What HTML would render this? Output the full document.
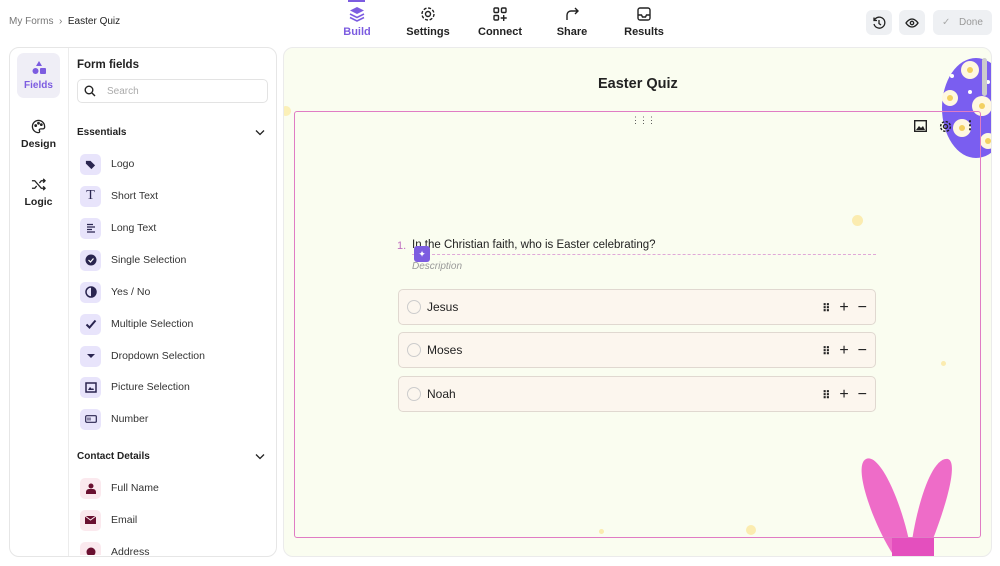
<!DOCTYPE html>
<html><head><style>
*{box-sizing:border-box;margin:0;padding:0}
body{width:1000px;height:566px;background:#fff;font-family:"Liberation Sans",sans-serif;color:#222;position:relative;overflow:hidden;font-size:11px}
.abs{position:absolute}
.nav{position:absolute;top:6px;text-align:center;font-size:11px;font-weight:bold;color:#222;width:70px}
.nav svg{display:block;margin:0 auto 4px}
.btn{position:absolute;top:10px;height:25px;background:#eef0f3;border-radius:6px}
.item{position:absolute;left:80px;height:22px;display:flex;align-items:center;font-size:10.5px;color:#333}
.ic{width:21px;height:21px;border-radius:5px;background:#e8e4fb;margin-right:10px;display:flex;align-items:center;justify-content:center}
.ic.r{background:#fbe9ee}
.opt{position:absolute;left:398px;width:478px;height:36px;border:1px solid #e0d8d0;border-radius:5px;background:#fcf6ee;display:flex;align-items:center;font-size:12px}
.opt .c{width:14px;height:14px;border:1px solid #ccc;border-radius:50%;margin:0 6px 0 8px}
.opt .t{position:absolute;right:8px;top:9px;display:flex;gap:9px;align-items:center;font-size:16px;color:#222}
</style></head><body>
<div class="abs" style="left:9px;top:16px;font-size:10px;color:#777">My Forms &nbsp;›&nbsp; <span style="color:#222">Easter Quiz</span></div>

<div class="nav" style="left:322px;color:#7c5ce0"><svg width="16" height="16" viewBox="0 0 16 16"><path d="M8 1L15 4.5 8 8 1 4.5z" fill="#7c5ce0"/><path d="M1 8l7 3.5L15 8M1 11.5l7 3.5 7-3.5" stroke="#7c5ce0" stroke-width="1.6" fill="none"/></svg>Build</div>
<div class="abs" style="left:348px;top:0;width:17px;height:2px;background:#7c5ce0"></div>
<div class="nav" style="left:393px"><svg width="16" height="16" viewBox="0 0 16 16"><circle cx="8" cy="8" r="2.5" stroke="#222" stroke-width="1.4" fill="none"/><circle cx="8" cy="8" r="6" stroke="#222" stroke-width="1.4" fill="none" stroke-dasharray="3 1.7"/></svg>Settings</div>
<div class="nav" style="left:465px"><svg width="16" height="16" viewBox="0 0 16 16" fill="none" stroke="#222" stroke-width="1.4"><rect x="2" y="2" width="4.5" height="4.5" rx="1"/><rect x="9.5" y="2" width="4.5" height="4.5" rx="1"/><rect x="2" y="9.5" width="4.5" height="4.5" rx="1"/><path d="M11.7 9v6M8.7 12h6"/></svg>Connect</div>
<div class="nav" style="left:537px"><svg width="16" height="16" viewBox="0 0 16 16" fill="none" stroke="#222" stroke-width="1.4"><path d="M3 14V9a4 4 0 014-4h7M11 2l3 3-3 3"/></svg>Share</div>
<div class="nav" style="left:609px"><svg width="16" height="16" viewBox="0 0 16 16" fill="none" stroke="#222" stroke-width="1.4"><rect x="2" y="2" width="12" height="12" rx="2"/><path d="M2 9h3.5l1 2h3l1-2H14"/></svg>Results</div>

<div class="btn" style="left:866px;width:26px"><svg class="abs" style="left:6px;top:6px" width="14" height="14" viewBox="0 0 14 14" fill="none" stroke="#222" stroke-width="1.3"><path d="M2.5 4A5.5 5.5 0 112 8M2 1.5V4.5H5M7 4v3.5l2 1.5"/></svg></div>
<div class="btn" style="left:899px;width:26px"><svg class="abs" style="left:6px;top:6px" width="14" height="14" viewBox="0 0 14 14" fill="none" stroke="#222" stroke-width="1.3"><path d="M1 7s2.5-4 6-4 6 4 6 4-2.5 4-6 4-6-4-6-4z"/><circle cx="7" cy="7" r="1.7"/></svg></div>
<div class="btn" style="left:933px;width:59px;color:#999;font-size:10px;line-height:25px;padding-left:26px">Done<span class="abs" style="left:9px;top:0;color:#aaa">✓</span></div>

<!-- left panel -->
<div class="abs" style="left:9px;top:47px;width:268px;height:510px;border:1px solid #e6e6e6;border-radius:10px"></div>
<div class="abs" style="left:68px;top:48px;width:1px;height:508px;background:#ececec"></div>
<div class="abs" style="left:17px;top:53px;width:43px;height:45px;background:#efeef6;border-radius:7px"></div>
<svg class="abs" style="left:31px;top:60px" width="16" height="16" viewBox="0 0 16 16" fill="#7c5ce0"><path d="M8 1l3 5H5z"/><circle cx="4.5" cy="11" r="3"/><rect x="9" y="8" width="6" height="6" rx="1"/></svg>
<div class="abs" style="left:17px;top:80px;width:43px;text-align:center;font-size:10px;font-weight:bold;color:#7c5ce0">Fields</div>
<svg class="abs" style="left:31px;top:119px" width="15" height="15" viewBox="0 0 16 16" fill="none" stroke="#222" stroke-width="1.4"><path d="M8 1.5a6.5 6.5 0 100 13c1.2 0 1.5-1 1-2s0-2 1.5-2H13a2 2 0 001.5-2.5A6.5 6.5 0 008 1.5z"/><circle cx="5" cy="7" r=".8"/><circle cx="8" cy="4.5" r=".8"/><circle cx="11" cy="6" r=".8"/></svg>
<div class="abs" style="left:17px;top:138px;width:43px;text-align:center;font-size:10.5px;font-weight:bold">Design</div>
<svg class="abs" style="left:31px;top:177px" width="15" height="15" viewBox="0 0 16 16" fill="none" stroke="#222" stroke-width="1.4"><path d="M1 4h3l7 8h4M1 12h3l2-2.5M9 6.5L11 4h4M13 2l2 2-2 2M13 10l2 2-2 2"/></svg>
<div class="abs" style="left:17px;top:196px;width:43px;text-align:center;font-size:10.5px;font-weight:bold">Logic</div>

<div class="abs" style="left:77px;top:59px;font-size:11.5px;font-weight:bold">Form fields</div>
<div class="abs" style="left:77px;top:79px;width:191px;height:24px;border:1px solid #e3e3e3;border-radius:5px"></div>
<svg class="abs" style="left:84px;top:85px" width="12" height="12" viewBox="0 0 12 12" fill="none" stroke="#222" stroke-width="1.4"><circle cx="5" cy="5" r="3.8"/><path d="M8 8l3 3"/></svg>
<div class="abs" style="left:107px;top:86px;font-size:10px;color:#aaa">Search</div>
<div class="abs" style="left:77px;top:127px;font-size:10px;font-weight:bold">Essentials</div>
<svg class="abs" style="left:255px;top:129px" width="10" height="7"><path d="M1 1.5l4 4 4-4" stroke="#222" stroke-width="1.3" fill="none"/></svg>

<div class="item" style="top:153px"><div class="ic"><svg width="11" height="11" viewBox="0 0 12 12"><path d="M1 2h5l5 5-4 4-6-6z" fill="#2a2550"/></svg></div>Logo</div>
<div class="item" style="top:185px"><div class="ic" style="font-family:'Liberation Serif',serif;font-size:14px;color:#2a2550">T</div>Short Text</div>
<div class="item" style="top:217px"><div class="ic"><svg width="10" height="10" viewBox="0 0 10 10" stroke="#2a2550" stroke-width="1.3"><path d="M1 1.5h6M1 4h8M1 6.5h5M1 9h8"/></svg></div>Long Text</div>
<div class="item" style="top:249px"><div class="ic"><svg width="12" height="12"><circle cx="6" cy="6" r="5.5" fill="#2a2550"/><path d="M3.5 6l2 2 3-3.5" stroke="#fff" stroke-width="1.2" fill="none"/></svg></div>Single Selection</div>
<div class="item" style="top:281px"><div class="ic"><svg width="12" height="12"><circle cx="6" cy="6" r="5" fill="none" stroke="#2a2550" stroke-width="1.5"/><path d="M6 1a5 5 0 010 10z" fill="#2a2550"/></svg></div>Yes / No</div>
<div class="item" style="top:313px"><div class="ic"><svg width="12" height="12"><path d="M1.5 6.5l3 3 6-7" stroke="#2a2550" stroke-width="2" fill="none"/></svg></div>Multiple Selection</div>
<div class="item" style="top:345px"><div class="ic"><svg width="8" height="6"><path d="M0 1h8L4 5z" fill="#2a2550"/></svg></div>Dropdown Selection</div>
<div class="item" style="top:376px"><div class="ic"><svg width="12" height="11"><rect x="1" y="1" width="10" height="9" fill="none" stroke="#2a2550" stroke-width="1.5"/><path d="M3 8l2-3 2 2 1-1 1 2z" fill="#2a2550"/></svg></div>Picture Selection</div>
<div class="item" style="top:408px"><div class="ic"><svg width="12" height="8"><rect x=".7" y=".7" width="10.6" height="6.6" rx="1" fill="none" stroke="#2a2550" stroke-width="1.2"/><path d="M3 2.5v3M5 2.5v3" stroke="#2a2550"/></svg></div>Number</div>
<div class="abs" style="left:77px;top:451px;font-size:10px;font-weight:bold">Contact Details</div>
<svg class="abs" style="left:255px;top:453px" width="10" height="7"><path d="M1 1.5l4 4 4-4" stroke="#222" stroke-width="1.3" fill="none"/></svg>
<div class="item" style="top:477px"><div class="ic r"><svg width="10" height="11"><circle cx="5" cy="3" r="2.5" fill="#6a1030"/><path d="M0 11v-2a3 3 0 013-3h4a3 3 0 013 3v2z" fill="#6a1030"/></svg></div>Full Name</div>
<div class="item" style="top:509px"><div class="ic r"><svg width="11" height="8"><rect width="11" height="8" fill="#6a1030"/><path d="M0 0l5.5 4L11 0" stroke="#fbe9ee" fill="none"/></svg></div>Email</div>
<div class="abs" style="left:70px;top:541px;width:200px;height:14px;overflow:hidden"><div class="item" style="left:10px;top:0"><div class="ic r"><svg width="10" height="10"><circle cx="5" cy="5" r="4.5" fill="#6a1030"/></svg></div>Address</div></div>

<!-- canvas -->
<div class="abs" style="left:283px;top:47px;width:709px;height:510px;background:#fafdf0;border:1px solid #ebebeb;border-radius:10px;overflow:hidden">
  <div class="abs" style="left:-3px;top:58px;width:10px;height:10px;border-radius:50%;background:#fbf0b8"></div>
  <div class="abs" style="left:568px;top:167px;width:11px;height:11px;border-radius:50%;background:#fbecb0"></div>
  <div class="abs" style="left:462px;top:477px;width:10px;height:10px;border-radius:50%;background:#fbecb0"></div>
  <div class="abs" style="left:457px;top:265px;width:5px;height:5px;border-radius:50%;background:#fbe0b0"></div>
  <div class="abs" style="left:657px;top:313px;width:5px;height:5px;border-radius:50%;background:#fbecb0"></div>
  <div class="abs" style="left:315px;top:481px;width:5px;height:5px;border-radius:50%;background:#fbecb0"></div>
  <svg class="abs" style="left:656px;top:8px" width="56" height="104" viewBox="0 0 56 104"><ellipse cx="36" cy="52" rx="34" ry="50" fill="#7a5ef0"/>
   <g fill="#fff8e0"><circle cx="30" cy="14" r="9"/><circle cx="42" cy="50" r="10"/><circle cx="10" cy="42" r="8"/><circle cx="22" cy="72" r="9"/><circle cx="48" cy="85" r="8"/></g>
   <g fill="#f3d060"><circle cx="30" cy="14" r="3"/><circle cx="42" cy="50" r="3"/><circle cx="10" cy="42" r="3"/><circle cx="22" cy="72" r="3"/><circle cx="48" cy="85" r="3"/></g>
   <g fill="#fff"><circle cx="12" cy="20" r="2"/><circle cx="48" cy="26" r="2"/><circle cx="30" cy="36" r="2"/></g></svg>
  <div class="abs" style="left:698px;top:10px;width:5px;height:38px;border-radius:3px;background:#ccc"></div>
  <svg class="abs" style="left:570px;top:408px" width="104" height="102" viewBox="0 0 104 102"><path d="M40 100C20 70 -2 10 12 3 26 -4 50 50 58 100z" fill="#ee6cc8"/><path d="M56 100C60 60 76 0 94 3c12 4-6 60-22 97z" fill="#ee6cc8"/><rect x="38" y="82" width="42" height="22" fill="#e44fbe"/></svg>
</div>
<div class="abs" style="left:598px;top:76px;font-size:14.5px;font-weight:bold;color:#222">Easter Quiz</div>
<div class="abs" style="left:294px;top:111px;width:687px;height:427px;border:1px solid #e07cc4;border-radius:3px"></div>
<div class="abs" style="left:631px;top:118px;font-size:9px;letter-spacing:-1px;line-height:4px;color:#555">⋮⋮⋮</div>
<svg class="abs" style="left:914px;top:120px" width="13" height="12"><rect x=".7" y=".7" width="11.6" height="10.6" fill="none" stroke="#222" stroke-width="1.4"/><path d="M2 10l3-4 2 2 2-2 2 4z" fill="#222"/></svg>
<svg class="abs" style="left:939px;top:120px" width="13" height="13" viewBox="0 0 16 16"><circle cx="8" cy="8" r="2.5" stroke="#222" stroke-width="1.6" fill="none"/><circle cx="8" cy="8" r="6" stroke="#222" stroke-width="1.8" fill="none" stroke-dasharray="3 1.7"/></svg>
<div class="abs" style="left:964px;top:118px;font-size:12px;font-weight:bold">⋮</div>

<div class="abs" style="left:397px;top:240px;font-size:11px;color:#c070c0">1.</div>
<div class="abs" style="left:412px;top:239px;font-size:11.5px;color:#222">In the Christian faith, who is Easter celebrating?</div>
<div class="abs" style="left:412px;top:254px;width:464px;border-top:1px dashed #e0a8d8"></div>
<div class="abs" style="left:414px;top:246px;width:16px;height:16px;border-radius:3px;background:#7c5ce0;color:#fff;font-size:9px;text-align:center;line-height:16px">✦</div>
<div class="abs" style="left:412px;top:261px;font-size:10px;color:#999;font-style:italic">Description</div>

<div class="opt" style="top:289px"><span class="c"></span>Jesus<span class="t"><b style="font-size:11px">⠿</b>+<span>−</span></span></div>
<div class="opt" style="top:332px"><span class="c"></span>Moses<span class="t"><b style="font-size:11px">⠿</b>+<span>−</span></span></div>
<div class="opt" style="top:376px"><span class="c"></span>Noah<span class="t"><b style="font-size:11px">⠿</b>+<span>−</span></span></div>
</body></html>
